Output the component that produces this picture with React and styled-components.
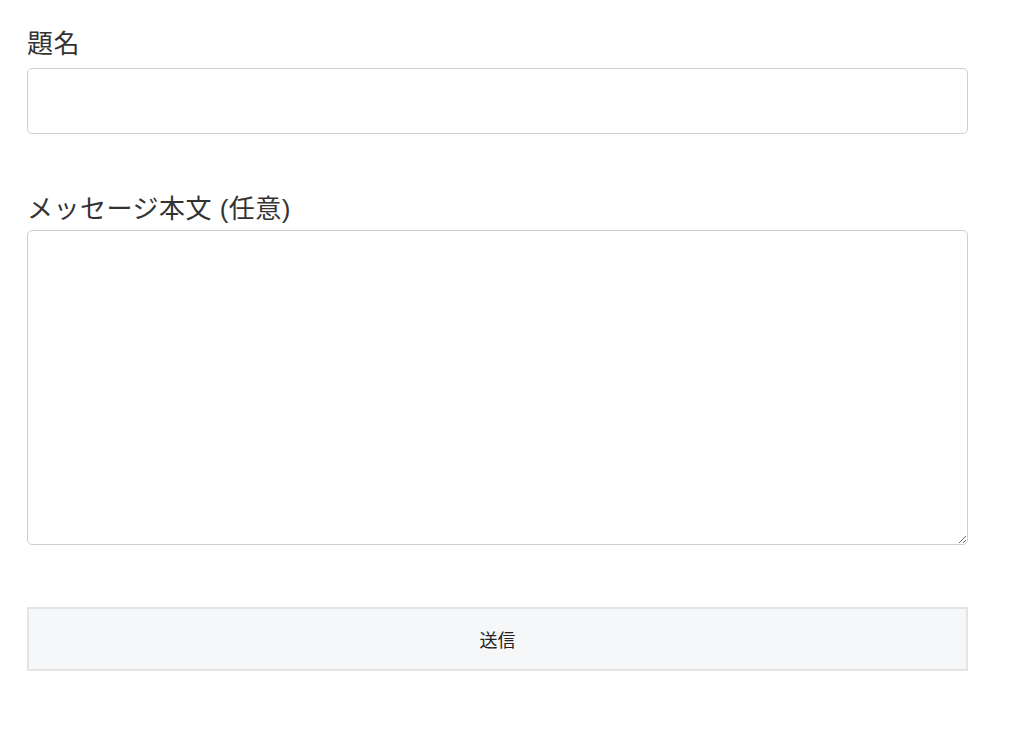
import styled, { createGlobalStyle } from 'styled-components';

const GlobalStyle = createGlobalStyle`
  html, body {
    margin: 0;
    padding: 0;
    background: #ffffff;
  }
  body {
    font-family: "Liberation Sans", "Noto Sans CJK JP", sans-serif;
    color: #333333;
  }
`;

const App = () => {
  return (
    <>
      <GlobalStyle />
      <Form onSubmit={(e) => e.preventDefault()}>
        <Field>
          <Label htmlFor="subject">題名</Label>
          <TextInput id="subject" type="text" />
        </Field>
        <Field>
          <Label htmlFor="body">メッセージ本文 (任意)</Label>
          <TextArea id="body" />
        </Field>
        <SubmitButton type="submit">送信</SubmitButton>
      </Form>
    </>
  );
};

export default App;

// Styled Components

const Form = styled.form`
  width: 941px;
  padding: 28px 0 0 27px;
  display: flex;
  flex-direction: column;
  gap: 59px;
`;

const Field = styled.div`
  display: flex;
  flex-direction: column;
`;

const Label = styled.label`
  font-size: 26px;
  line-height: 33px;
  letter-spacing: 0.5px;
  color: #333333;
  margin-bottom: 7px;
`;

const TextInput = styled.input`
  box-sizing: border-box;
  width: 100%;
  height: 66px;
  border: 1px solid #cfcfcf;
  border-radius: 5px;
  padding: 0 12px;
  font-size: 18px;
  font-family: inherit;
  outline: none;
`;

const TextArea = styled.textarea`
  box-sizing: border-box;
  width: 100%;
  height: 315px;
  border: 1px solid #cfcfcf;
  border-radius: 5px;
  padding: 12px;
  font-size: 18px;
  font-family: inherit;
  resize: vertical;
  outline: none;
  margin-top: -3px;
`;

const SubmitButton = styled.button`
  box-sizing: border-box;
  width: 100%;
  height: 64px;
  margin-top: 3px;
  background: #f6f7f9;
  border: 2px solid #e4e4e4;
  border-radius: 0;
  font-family: "Liberation Sans", "Noto Sans CJK JP", sans-serif;
  font-size: 18px;
  color: #222222;
  cursor: pointer;
`;
